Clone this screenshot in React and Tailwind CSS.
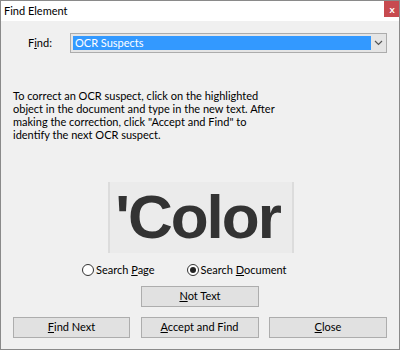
import React from "react";

const font = { fontFamily: 'Lato, "Noto Sans", sans-serif' };

function Btn({ children, className = "" }) {
  return (
    <div className={"flex items-center justify-center h-[21px] border border-[#adadad] bg-[#e1e1e1] text-[11px] text-black " + className}>
      {children}
    </div>
  );
}

export default function App() {
  return (
    <div className="w-[400px] h-[350px] flex flex-col border border-[#8a8a8a] bg-[#f0f0f0] overflow-hidden text-black" style={font}>
      <div className="h-[20px] bg-white flex items-start justify-between shrink-0">
        <div className="pl-[3px] pt-[3px] text-[11px] leading-[14px]">Find Element</div>
        <div className="w-[16px] h-[17px] bg-[#c74a4f] flex items-center justify-center text-white text-[10px] font-bold leading-none mr-[-1px] mt-[-1px]">x</div>
      </div>
      <div className="flex-1 flex flex-col relative">
        <div className="flex items-center mt-[12px] h-[20px]">
          <div className="w-[69px] pl-[27px] text-[11px]">F<span className="underline">i</span>nd:</div>
          <div className="w-[317px] h-[20px] border border-[#acacac] bg-[#e5e5e5] flex items-center">
            <div className="flex-1 h-[14px] ml-[2px] bg-[#3399ff] text-white text-[11px] leading-[14px] pl-[2px]">OCR Suspects</div>
            <div className="w-[15px] flex items-center justify-center">
              <svg width="9" height="6" viewBox="0 0 9 6"><path d="M1 1 L4.5 4.5 L8 1" stroke="#555" strokeWidth="1.2" fill="none" /></svg>
            </div>
          </div>
        </div>
        <div className="mt-[36px] pl-[12px] text-[11px] leading-[13px]">
          To correct an OCR suspect, click on the highlighted<br />
          object in the document and type in the new text. After<br />
          making the correction, click "Accept and Find" to<br />
          identify the next OCR suspect.
        </div>
        <div className="flex justify-center mt-[41px] ml-[1px]">
          <div className="w-[186px] h-[71px] bg-[#ebebeb] border-l-2 border-r-2 border-[#dcdcdc] flex items-center justify-center overflow-hidden">
            <span className="text-[#333] font-bold text-[62px] leading-none tracking-[-2px] mt-[-2px] mr-[6px]" style={{ fontFamily: '"Liberation Sans", sans-serif' }}>'Color</span>
          </div>
        </div>
        <div className="flex items-center mt-[10px] h-[14px] text-[11px]">
          <div className="flex items-center ml-[81px]">
            <div className="w-[12px] h-[12px] rounded-full border border-[#333] bg-white mr-[2px]"></div>
            <span>Search <span className="underline">P</span>age</span>
          </div>
          <div className="flex items-center ml-[32px]">
            <div className="w-[12px] h-[12px] rounded-full border border-[#333] bg-white mr-[2px] flex items-center justify-center">
              <div className="w-[6px] h-[6px] rounded-full bg-[#222]"></div>
            </div>
            <span>Search <span className="underline">D</span>ocument</span>
          </div>
        </div>
        <div className="flex justify-center mt-[9px]">
          <Btn className="w-[118px]"><span><span className="underline">N</span>ot Text</span></Btn>
        </div>
        <div className="flex justify-between px-[12px] mt-[10px]">
          <Btn className="w-[117px]"><span><span className="underline">F</span>ind Next</span></Btn>
          <Btn className="w-[118px]"><span><span className="underline">A</span>ccept and Find</span></Btn>
          <Btn className="w-[118px]"><span><span className="underline">C</span>lose</span></Btn>
        </div>
      </div>
    </div>
  );
}
